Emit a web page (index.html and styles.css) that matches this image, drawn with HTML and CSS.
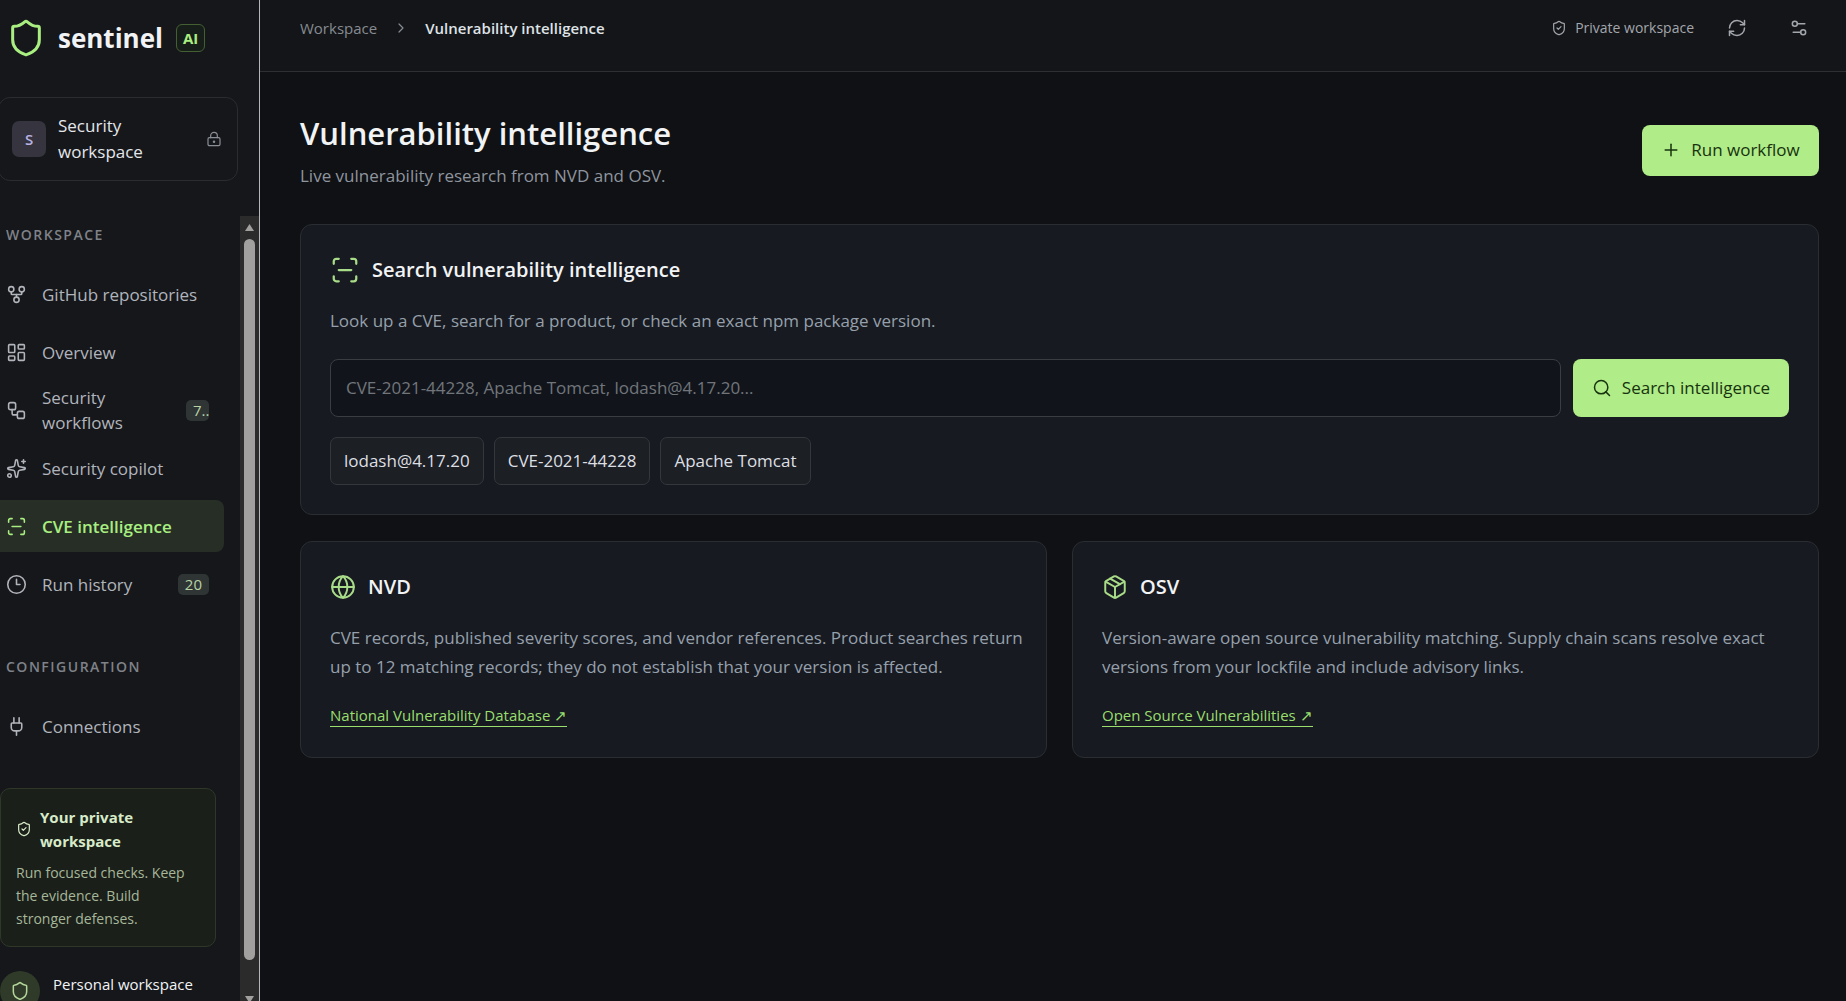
FILE: index.html
```html
<!DOCTYPE html>
<html lang="en">
<head>
<meta charset="utf-8">
<meta name="viewport" content="width=device-width, initial-scale=1">
<title>Vulnerability intelligence</title>
<link rel="stylesheet" href="styles.css">
</head>
<body>
<svg class="sprite" aria-hidden="true">
  <symbol id="shield" viewBox="0 0 24 24"><path d="M20 13c0 5-3.5 7.5-7.66 8.95a1 1 0 0 1-.67-.01C7.5 20.5 4 18 4 13V6a1 1 0 0 1 1-1c2 0 4.5-1.2 6.24-2.72a1.17 1.17 0 0 1 1.52 0C14.51 3.81 17 5 19 5a1 1 0 0 1 1 1z"/></symbol>
  <symbol id="shield-check" viewBox="0 0 24 24"><path d="M20 13c0 5-3.5 7.5-7.66 8.95a1 1 0 0 1-.67-.01C7.5 20.5 4 18 4 13V6a1 1 0 0 1 1-1c2 0 4.5-1.2 6.24-2.72a1.17 1.17 0 0 1 1.52 0C14.51 3.81 17 5 19 5a1 1 0 0 1 1 1z"/><path d="m9 12 2 2 4-4"/></symbol>
  <symbol id="lock" viewBox="0 0 24 24"><circle cx="12" cy="16" r="1"/><rect x="3" y="10" width="18" height="12" rx="2"/><path d="M7 10V7a5 5 0 0 1 10 0v3"/></symbol>
  <symbol id="fork" viewBox="0 0 24 24"><circle cx="12" cy="18" r="3"/><circle cx="6" cy="6" r="3"/><circle cx="18" cy="6" r="3"/><path d="M18 9v2c0 .6-.4 1-1 1H7c-.6 0-1-.4-1-1V9"/><path d="M12 12v3"/></symbol>
  <symbol id="dashboard" viewBox="0 0 24 24"><rect width="7" height="9" x="3" y="3" rx="1"/><rect width="7" height="5" x="14" y="3" rx="1"/><rect width="7" height="9" x="14" y="12" rx="1"/><rect width="7" height="5" x="3" y="16" rx="1"/></symbol>
  <symbol id="workflow" viewBox="0 0 24 24"><rect width="8" height="8" x="3" y="3" rx="2"/><path d="M7 11v4a2 2 0 0 0 2 2h4"/><rect width="8" height="8" x="13" y="13" rx="2"/></symbol>
  <symbol id="sparkles" viewBox="0 0 24 24"><path d="M11.017 2.814a1 1 0 0 1 1.966 0l1.051 5.558a2 2 0 0 0 1.594 1.594l5.558 1.051a1 1 0 0 1 0 1.966l-5.558 1.051a2 2 0 0 0-1.594 1.594l-1.051 5.558a1 1 0 0 1-1.966 0l-1.051-5.558a2 2 0 0 0-1.594-1.594l-5.558-1.051a1 1 0 0 1 0-1.966l5.558-1.051a2 2 0 0 0 1.594-1.594z"/><path d="M20 2v4"/><path d="M22 4h-4"/><circle cx="4" cy="20" r="2"/></symbol>
  <symbol id="scan" viewBox="0 0 24 24"><path d="M3 7V5a2 2 0 0 1 2-2h2"/><path d="M17 3h2a2 2 0 0 1 2 2v2"/><path d="M21 17v2a2 2 0 0 1-2 2h-2"/><path d="M7 21H5a2 2 0 0 1-2-2v-2"/><path d="M7 12h10"/></symbol>
  <symbol id="clock" viewBox="0 0 24 24"><circle cx="12" cy="12" r="10"/><path d="M12 6v6h4"/></symbol>
  <symbol id="plug" viewBox="0 0 24 24"><path d="M12 22v-5"/><path d="M15 8V2"/><path d="M17 8a1 1 0 0 1 1 1v4a4 4 0 0 1-4 4h-4a4 4 0 0 1-4-4V9a1 1 0 0 1 1-1z"/><path d="M9 8V2"/></symbol>
  <symbol id="chevron" viewBox="0 0 24 24"><path d="m9 18 6-6-6-6"/></symbol>
  <symbol id="refresh" viewBox="0 0 24 24"><path d="M3 12a9 9 0 0 1 9-9 9.75 9.75 0 0 1 6.74 2.74L21 8"/><path d="M21 3v5h-5"/><path d="M21 12a9 9 0 0 1-9 9 9.75 9.75 0 0 1-6.74-2.74L3 16"/><path d="M8 16H3v5"/></symbol>
  <symbol id="settings" viewBox="0 0 24 24"><path d="M14 17H5"/><path d="M19 7h-9"/><circle cx="17" cy="17" r="3"/><circle cx="7" cy="7" r="3"/></symbol>
  <symbol id="plus" viewBox="0 0 24 24"><path d="M5 12h14"/><path d="M12 5v14"/></symbol>
  <symbol id="search" viewBox="0 0 24 24"><circle cx="11" cy="11" r="8"/><path d="m21 21-4.34-4.34"/></symbol>
  <symbol id="globe" viewBox="0 0 24 24"><circle cx="12" cy="12" r="10"/><path d="M12 2a14.5 14.5 0 0 0 0 20 14.5 14.5 0 0 0 0-20"/><path d="M2 12h20"/></symbol>
  <symbol id="package" viewBox="0 0 24 24"><path d="M11 21.73a2 2 0 0 0 2 0l7-4A2 2 0 0 0 21 16V8a2 2 0 0 0-1-1.73l-7-4a2 2 0 0 0-2 0l-7 4A2 2 0 0 0 3 8v8a2 2 0 0 0 1 1.73z"/><path d="M12 22V12"/><path d="M3.29 7 12 12l8.71-5"/><path d="m7.5 4.27 9 5.15"/></symbol>
</svg>

<div class="app">
  <aside class="sidebar">
    <div class="brand">
      <svg class="icon brand-mark"><use href="#shield"/></svg>
      <span class="brand-name">sentinel</span>
      <span class="brand-tag">AI</span>
    </div>

    <button class="switcher" type="button">
      <span class="switcher-initial">S</span>
      <span class="switcher-name">Security workspace</span>
      <svg class="icon icon-16"><use href="#lock"/></svg>
    </button>

    <div class="scroller">
      <div class="scroll-content">
        <nav class="nav">
          <h2 class="nav-label">Workspace</h2>
          <a class="nav-item" href="#repositories"><svg class="icon icon-nav"><use href="#fork"/></svg><span class="nav-text">GitHub repositories</span></a>
          <a class="nav-item" href="#overview"><svg class="icon icon-nav"><use href="#dashboard"/></svg><span class="nav-text">Overview</span></a>
          <a class="nav-item" href="#workflows"><svg class="icon icon-nav"><use href="#workflow"/></svg><span class="nav-text">Security workflows</span><span class="count count-clipped">7..</span></a>
          <a class="nav-item" href="#copilot"><svg class="icon icon-nav"><use href="#sparkles"/></svg><span class="nav-text">Security copilot</span></a>
          <a class="nav-item active" href="#cve" aria-current="page"><svg class="icon icon-nav"><use href="#scan"/></svg><span class="nav-text">CVE intelligence</span></a>
          <a class="nav-item" href="#history"><svg class="icon icon-nav"><use href="#clock"/></svg><span class="nav-text">Run history</span><span class="count">20</span></a>
        </nav>
        <nav class="nav nav-config">
          <h2 class="nav-label">Configuration</h2>
          <a class="nav-item" href="#connections"><svg class="icon icon-nav"><use href="#plug"/></svg><span class="nav-text">Connections</span></a>
        </nav>
        <section class="note">
          <h3 class="note-title"><svg class="icon icon-16"><use href="#shield-check"/></svg>Your private workspace</h3>
          <p class="note-text">Run focused checks. Keep the evidence. Build stronger defenses.</p>
        </section>
        <div class="account">
          <span class="avatar"><svg class="icon icon-20"><use href="#shield"/></svg></span>
          <span class="account-name">Personal workspace</span>
        </div>
      </div>
      <div class="scrollbar" aria-hidden="true">
        <span class="arrow arrow-up"></span>
        <span class="thumb"></span>
        <span class="arrow arrow-down"></span>
      </div>
    </div>
  </aside>

  <div class="page">
    <header class="topbar">
      <nav class="crumbs" aria-label="Breadcrumb">
        <a class="crumb" href="#workspace">Workspace</a>
        <svg class="icon icon-16"><use href="#chevron"/></svg>
        <span class="crumb-current">Vulnerability intelligence</span>
      </nav>
      <div class="tools">
        <span class="privacy"><svg class="icon icon-16"><use href="#shield-check"/></svg>Private workspace</span>
        <button class="tool" type="button" aria-label="Refresh"><svg class="icon icon-20"><use href="#refresh"/></svg></button>
        <button class="tool" type="button" aria-label="Settings"><svg class="icon icon-20"><use href="#settings"/></svg></button>
      </div>
    </header>

    <main class="main">
      <div class="heading">
        <div>
          <h1 class="title">Vulnerability intelligence</h1>
          <p class="subtitle">Live vulnerability research from NVD and OSV.</p>
        </div>
        <button class="primary primary-run" type="button"><svg class="icon icon-20"><use href="#plus"/></svg>Run workflow</button>
      </div>

      <section class="card">
        <h2 class="card-title"><svg class="icon icon-30"><use href="#scan"/></svg>Search vulnerability intelligence</h2>
        <p class="card-text"><label for="query">Look up a CVE, search for a product, or check an exact npm package version.</label></p>
        <form class="search">
          <input class="search-input" id="query" type="text" placeholder="CVE-2021-44228, Apache Tomcat, lodash@4.17.20...">
          <button class="primary primary-search" type="button"><svg class="icon icon-20"><use href="#search"/></svg>Search intelligence</button>
        </form>
        <div class="chips">
          <button class="chip" type="button">lodash@4.17.20</button>
          <button class="chip" type="button">CVE-2021-44228</button>
          <button class="chip" type="button">Apache Tomcat</button>
        </div>
      </section>

      <div class="sources">
        <section class="card source">
          <h2 class="card-title"><svg class="icon icon-26"><use href="#globe"/></svg>NVD</h2>
          <p class="card-text">CVE records, published severity scores, and vendor references. Product searches return up to 12 matching records; they do not establish that your version is affected.</p>
          <a class="source-link" href="#nvd">National Vulnerability Database ↗</a>
        </section>
        <section class="card source">
          <h2 class="card-title"><svg class="icon icon-26"><use href="#package"/></svg>OSV</h2>
          <p class="card-text">Version-aware open source vulnerability matching. Supply chain scans resolve exact versions from your lockfile and include advisory links.</p>
          <a class="source-link" href="#osv">Open Source Vulnerabilities ↗</a>
        </section>
      </div>
    </main>
  </div>
</div>
</body>
</html>
```
FILE: styles.css
```css
*,
*::before,
*::after {
  box-sizing: border-box;
}

body,
h1,
h2,
h3,
p {
  margin: 0;
}

body {
  background: #0f1114;
  color: #f1f3f5;
  font-family: "Segoe UI", "Open Sans", "Noto Sans", sans-serif;
  font-size: 17px;
  line-height: 26px;
}

button,
input {
  font: inherit;
  color: inherit;
}

button {
  cursor: pointer;
}

a {
  color: inherit;
  text-decoration: none;
}

.sprite {
  display: none;
}

.icon {
  flex: none;
  fill: none;
  stroke: currentColor;
  stroke-width: 1.8;
  stroke-linecap: round;
  stroke-linejoin: round;
}

.icon-16 { width: 16px; height: 16px; }
.icon-20 { width: 20px; height: 20px; }
.icon-nav { width: 21px; height: 21px; }
.icon-26 { width: 26px; height: 26px; }
.icon-30 { width: 30px; height: 30px; }

.app {
  display: flex;
  height: 100vh;
  overflow: hidden;
}

/* Sidebar */

.sidebar {
  display: flex;
  flex: none;
  flex-direction: column;
  width: 260px;
  border-right: 1px solid #b4b6ba;
  background: #15171b;
}

.brand {
  display: flex;
  align-items: center;
  height: 76px;
  padding-left: 6px;
}

.brand-mark {
  width: 40px;
  height: 40px;
  margin-right: 12px;
  color: #a9ee80;
}

.brand-name {
  margin-right: 13px;
  font-size: 26px;
  font-weight: 700;
}

.brand-tag {
  padding: 0 6px;
  border: 1px solid #446033;
  border-radius: 6px;
  background: #171d19;
  color: #a9ee80;
  font-size: 15px;
  font-weight: 700;
}

.switcher {
  display: flex;
  align-items: center;
  gap: 12px;
  height: 84px;
  margin: 21px 21px 35px -2px;
  padding: 0 15px 0 13px;
  border: 1px solid #2a2c31;
  border-radius: 12px;
  background: #15171b;
  color: #8b8e97;
  text-align: left;
}

.switcher-initial {
  width: 34px;
  border-radius: 7px;
  background: #35343f;
  color: #b9b2e2;
  font-size: 15px;
  font-weight: 600;
  line-height: 36px;
  text-align: center;
}

.switcher-name {
  flex: 1;
  color: #e4e6ea;
}

.scroller {
  display: flex;
  flex: 1;
  min-height: 0;
}

.scroll-content {
  flex: 1;
  overflow: hidden;
}

.nav {
  display: flex;
  flex-direction: column;
  gap: 6px;
  padding-right: 16px;
}

.nav-config {
  margin-top: 38px;
}

.nav-label {
  padding: 6px 6px 14px;
  color: #7f8288;
  font-size: 14px;
  font-weight: 600;
  letter-spacing: 1.5px;
  text-transform: uppercase;
}

.nav-item {
  display: flex;
  align-items: center;
  gap: 15px;
  height: 52px;
  padding: 0 15px 0 6px;
  border-radius: 0 8px 8px 0;
  color: #b1b4bb;
  line-height: 25px;
}

.nav-text {
  flex: 1;
}

.nav-item.active {
  background: #272e26;
  color: #a9ee80;
  font-weight: 600;
}

.count {
  padding: 0 7px;
  border-radius: 5px;
  background: #2f3534;
  color: #b9d3a4;
  font-size: 15px;
  line-height: 21px;
}

.count-clipped {
  width: 23px;
  overflow: hidden;
}

.note {
  margin: 36px 24px 0 0;
  padding: 16px 20px 16px 15px;
  border: 1px solid #2f3828;
  border-radius: 10px;
  background: #1a1f19;
}

.note-title {
  display: flex;
  align-items: center;
  gap: 8px;
  color: #d8ebc9;
  font-size: 15px;
  font-weight: 700;
  line-height: 24px;
}

.note-text {
  padding-top: 8px;
  color: #a7b79a;
  font-size: 14px;
  line-height: 23px;
}

.account {
  display: flex;
  gap: 13px;
  margin-top: 24px;
}

.avatar {
  display: grid;
  place-items: center;
  width: 40px;
  height: 40px;
  border-radius: 50%;
  background: #2f3b28;
  color: #b5d69b;
}

.account-name {
  font-size: 15px;
}

.scrollbar {
  display: flex;
  flex: none;
  flex-direction: column;
  align-items: center;
  gap: 8px;
  width: 19px;
  padding-top: 8px;
  background: #2b2b2c;
}

.thumb {
  flex: 1;
  width: 11px;
  margin-bottom: 28px;
  border-radius: 6px;
  background: #a1a09f;
}

.arrow {
  width: 9px;
  height: 7px;
  background: #a1a09f;
}

.arrow-up {
  clip-path: polygon(50% 0, 100% 100%, 0 100%);
}

.arrow-down {
  height: 5px;
  clip-path: polygon(0 0, 100% 0, 65% 100%, 35% 100%);
}

/* Page */

.page {
  flex: 1;
  min-width: 0;
}

.topbar {
  display: flex;
  align-items: center;
  justify-content: space-between;
  height: 72px;
  padding: 0 25px 16px 40px;
  border-bottom: 1px solid #2d2f33;
  background: #131518;
}

.crumbs {
  display: flex;
  align-items: center;
  gap: 16px;
  color: #878b92;
  font-size: 15px;
}

.crumb-current {
  color: #dfe2e6;
  font-weight: 600;
}

.tools {
  display: flex;
  align-items: center;
  gap: 18px;
  color: #a3a6ad;
}

.privacy {
  display: flex;
  align-items: center;
  gap: 8px;
  padding-right: 3px;
  font-size: 14px;
}

.tool {
  display: grid;
  place-items: center;
  width: 44px;
  height: 44px;
  padding: 0;
  border: 0;
  background: none;
}

.main {
  display: grid;
  gap: 26px;
  padding: 39px 27px 40px 40px;
}

.heading {
  display: flex;
  align-items: center;
  justify-content: space-between;
  padding-bottom: 9px;
}

.title {
  font-size: 31px;
  font-weight: 600;
  line-height: 44px;
}

.subtitle {
  padding-top: 8px;
  color: #8f959f;
}

.primary {
  display: flex;
  flex: none;
  align-items: center;
  justify-content: center;
  gap: 10px;
  border: 0;
  border-radius: 8px;
  background: #b0ec87;
  color: #17330f;
}

.primary-run {
  width: 177px;
  height: 51px;
}

.primary-search {
  width: 216px;
}

.card {
  padding: 29px;
  border: 1px solid #2a2d32;
  border-radius: 12px;
  background: #171a20;
}

.card-title {
  display: flex;
  align-items: center;
  gap: 12px;
  height: 32px;
  font-size: 20px;
  font-weight: 600;
}

.card-title .icon {
  color: #a9dc88;
}

.card-text {
  padding-top: 20px;
  color: #96a0ac;
  line-height: 29px;
}

.search {
  display: flex;
  gap: 12px;
  height: 58px;
  margin: 24px 0 20px;
}

.search-input {
  flex: 1;
  min-width: 0;
  padding: 0 15px;
  border: 1px solid #3a3d42;
  border-radius: 8px;
  background: #11151b;
}

.search-input::placeholder {
  color: #71757b;
  opacity: 1;
}

.chips {
  display: flex;
  gap: 10px;
}

.chip {
  height: 48px;
  padding: 0 13px;
  border: 1px solid #34373c;
  border-radius: 7px;
  background: #1c1f24;
  color: #dcdfe3;
}

.sources {
  display: grid;
  grid-template-columns: 1fr 1fr;
  gap: 25px;
}

.source {
  padding-right: 20px;
}

.source-link {
  display: inline-block;
  margin-top: 24px;
  border-bottom: 1px solid #9ade6e;
  color: #9ade6e;
  font-size: 15px;
  line-height: 21px;
}
```
